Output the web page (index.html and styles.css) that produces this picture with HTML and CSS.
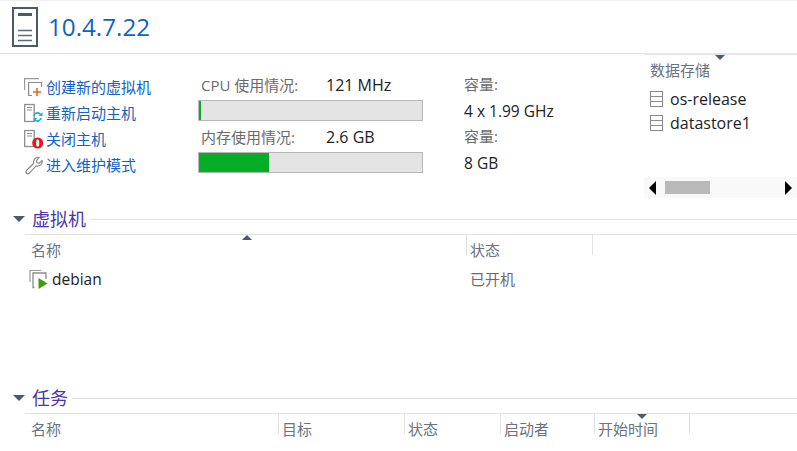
FILE: index.html
```html
<!DOCTYPE html>
<html lang="zh">
<head>
<meta charset="utf-8">
<title>10.4.7.22</title>
<link rel="stylesheet" href="styles.css">
</head>
<body>
<header class="page-head">
  <svg class="host-icon" width="26" height="40" viewBox="0 0 26 40"><rect x="1" y="1" width="24" height="38" fill="#fff" stroke="#4a5a68" stroke-width="2"/><rect x="6" y="6" width="14" height="3" fill="#4a5a68"/><path d="M6 23.5h14M6 28.5h14M6 33.5h14" stroke="#5f6c78" stroke-width="1.4"/></svg>
  <h1 class="host-name">10.4.7.22</h1>
</header>
<div class="summary">
  <ul class="actions">
    <li class="action">
      <svg width="20" height="20" viewBox="0 0 20 20"><path d="M.6 13V1.600H15" fill="none" stroke="#9a9a9a" stroke-width="1.2"/><path d="M8 18.500H4.600V5.500H17.500V10" fill="none" stroke="#8c8c8c" stroke-width="1.2"/><path d="M13 11v8M9 15h8" stroke="#f0631e" stroke-width="1.6"/></svg>
      <a href="#">创建新的虚拟机</a>
    </li>
    <li class="action">
      <svg width="20" height="20" viewBox="0 0 20 20"><rect x=".7" y="1.500" width="9.500" height="17" fill="#fff" stroke="#8e8e8e" stroke-width="1.3"/><path d="M3 4.500h5M3 7h5" stroke="#8e8e8e"/><path d="M10 13a3.500 3.500 0 0 1 6-2l1 1M17 15a3.500 3.500 0 0 1-6 2" fill="none" stroke="#22b0d4" stroke-width="1.800"/><path d="M18.500 9v4h-4zM9.500 19v-4h4z" fill="#22b0d4"/></svg>
      <a href="#">重新启动主机</a>
    </li>
    <li class="action">
      <svg width="20" height="20" viewBox="0 0 20 20"><rect x=".7" y="1.500" width="9.500" height="16" fill="#fff" stroke="#8e8e8e" stroke-width="1.3"/><path d="M3 4.500h5M3 7h5" stroke="#8e8e8e"/><circle cx="13.700" cy="14" r="5.500" fill="#e8141c"/><rect x="12.200" y="10.500" width="3" height="7" rx="1.500" fill="#fff"/></svg>
      <a href="#">关闭主机</a>
    </li>
    <li class="action">
      <svg width="20" height="20" viewBox="0 0 20 20"><path d="M2.500 15.500 9.800 8.300a4.500 4.500 0 0 1 5.400-5.700l-2.700 2.800.5 2.300 2.300.5 2.700-2.700a4.500 4.500 0 0 1-5.800 5.400l-6.900 7.300a1.800 1.800 0 0 1-2.800-2.700z" fill="#fff" stroke="#8a8a8a" stroke-width="1.2" stroke-linejoin="round"/></svg>
      <a href="#">进入维护模式</a>
    </li>
  </ul>
  <div class="usage">
    <div class="usage-row"><span class="usage-label">CPU 使用情况:</span><span class="usage-value">121 MHz</span></div>
    <div class="meter"><div class="meter-fill" style="width:1%"></div></div>
    <div class="usage-row"><span class="usage-label">内存使用情况:</span><span class="usage-value">2.6 GB</span></div>
    <div class="meter"><div class="meter-fill" style="width:31.500%"></div></div>
  </div>
  <dl class="capacity">
    <dt>容量:</dt>
    <dd>4 x 1.99 GHz</dd>
    <dt>容量:</dt>
    <dd>8 GB</dd>
  </dl>
  <section class="stores">
    <span class="arrow arrow-down stores-arrow"></span>
    <h2 class="stores-title">数据存储</h2>
    <ul class="store-list">
      <li class="store"><svg width="13" height="16" viewBox="0 0 13 16"><rect x=".5" y=".5" width="12" height="15" fill="none" stroke="#8a8a8a"/><path d="M1 5.500h11M1 10.500h11" stroke="#8a8a8a"/></svg>os-release</li>
      <li class="store"><svg width="13" height="16" viewBox="0 0 13 16"><rect x=".5" y=".5" width="12" height="15" fill="none" stroke="#8a8a8a"/><path d="M1 5.500h11M1 10.500h11" stroke="#8a8a8a"/></svg>datastore1</li>
    </ul>
    <div class="scrollbar">
      <span class="scroll-left"></span>
      <span class="scroll-thumb"></span>
      <span class="scroll-right"></span>
    </div>
  </section>
</div>
<section class="panel panel-vm">
  <div class="panel-head"><span class="arrow arrow-down panel-toggle"></span><h2 class="panel-title">虚拟机</h2><span class="panel-rule"></span></div>
  <div class="table-head vm-cols">
    <span class="arrow arrow-up sort-vm"></span>
    <div class="col">名称</div>
    <div class="col">状态</div>
    <div class="col"></div>
  </div>
  <div class="vm-row vm-cols">
    <div class="vm-name">
      <svg width="20" height="20" viewBox="0 0 20 20"><path d="M1 13V1.500h11" fill="none" stroke="#9a9a9a" stroke-width="1.2"/><path d="M5.500 18.500H4V4h13v6" fill="none" stroke="#8c8c8c" stroke-width="1.300"/><path d="M9.500 9l9 5.500-9 5.500z" fill="#3f9a10"/></svg>
      debian
    </div>
    <div class="vm-state">已开机</div>
  </div>
</section>
<section class="panel panel-task">
  <div class="panel-head"><span class="arrow arrow-down panel-toggle"></span><h2 class="panel-title">任务</h2><span class="panel-rule"></span></div>
  <div class="table-head task-cols">
    <span class="arrow arrow-down sort-task"></span>
    <div class="col">名称</div>
    <div class="col">目标</div>
    <div class="col">状态</div>
    <div class="col">启动者</div>
    <div class="col">开始时间</div>
    <div class="col"></div>
  </div>
</section>
</body>
</html>
```
FILE: styles.css
```css
* { box-sizing: border-box; }
html, body { margin: 0; height: 451px; overflow: hidden; background: #fff; }
body {
  font-family: "Open Sans", "Noto Sans CJK SC", sans-serif;
  font-size: 15px;
  color: #222;
  border-top: 1px solid #f0f0f0;
}
ul, dl, dd, h1, h2 { margin: 0; padding: 0; font-weight: 400; }
ul { list-style: none; }

.page-head {
  display: flex;
  align-items: center;
  gap: 10px;
  height: 53px;
  padding: 0 0 1px 12px;
  border-bottom: 1px solid #e2e2e2;
}
.host-icon { flex: none; }
.host-name { font-size: 24.200px; line-height: 1; color: #0f63c4; margin-top: 1px; }

.summary { display: flex; height: 145px; }
.actions { width: 198px; padding: 20px 0 0 24px; }
.action { display: flex; align-items: center; gap: 2px; height: 26px; }
.action svg { flex: none; }
.action a { color: #0f63c4; text-decoration: none; line-height: 20px; }

.usage { width: 225px; padding-top: 21px; }
.usage-row { display: flex; height: 25px; align-items: center; padding: 0 0 6px 3px; }
.usage-row + .meter + .usage-row { margin-top: 6px; }
.usage-label { width: 125px; color: #6b6b6b; }
.usage-value { color: #222; font-size: 16px; }
.meter { height: 21px; background: #e4e4e4; border: 1px solid #b8b8b8; }
.meter-fill { height: 100%; background: #06ad27; }

.capacity { width: 223px; padding: 17px 0 0 41px; }
.capacity dt, .capacity dd { height: 26px; line-height: 26px; }
.capacity dt { color: #6b6b6b; }
.capacity dd { color: #222; font-size: 15.500px; line-height: 28px; }

.stores {
  position: relative;
  flex: 1;
  margin-left: -2px;
  min-width: 0;
  border-top: 2px solid #e6e6e6;
  margin-top: -1px;
}
.stores-arrow { position: absolute; left: 71px; top: 0; }
.stores-title { font-size: 15px; line-height: 20px; margin: 5px 0 0 6px; color: #6b7280; }
.store-list { margin: 7px 0 0 6px; }
.store { display: flex; align-items: center; gap: 7px; height: 24px; font-size: 16px; color: #222; }
.scrollbar {
  display: flex;
  align-items: center;
  height: 21px;
  margin-top: 42px;
  padding: 0 5px;
  background: #f9f9f9;
}
.scroll-left, .scroll-right { width: 0; height: 0; border-top: 7px solid transparent; border-bottom: 7px solid transparent; }
.scroll-left { border-right: 7px solid #000; }
.scroll-right { border-left: 7px solid #000; margin-left: auto; }
.scroll-thumb { width: 45px; height: 13px; margin-left: 9px; background: #b9b9b9; }

.arrow { display: block; width: 0; height: 0; border-left: 5px solid transparent; border-right: 5px solid transparent; }
.arrow-down { border-top: 5px solid #4a5a68; }
.arrow-up { border-bottom: 5px solid #4a5a68; }

.panel-vm { height: 187px; padding-top: 8px; }
.panel-head { display: flex; align-items: center; height: 24px; padding-left: 13px; }
.panel-toggle { border-left-width: 6px; border-right-width: 6px; border-top-width: 6px; }
.panel-title { font-size: 18px; line-height: 24px; color: #4a35ae; margin-left: 7px; }
.panel-rule { flex: 1; height: 1px; margin-left: 4px; background: #e2e2e2; }

.table-head {
  position: relative;
  display: grid;
  height: 21px;
  margin: 3px 0 0 25px;
  border-top: 1px solid #e2e2e2;
  color: #6b7280;
}
.vm-cols { grid-template-columns: 441px 126px 1fr; }
.task-cols { grid-template-columns: 253px 126px 96px 94px 95px 1fr; }
.col { padding: 5px 0 0 6px; line-height: 20px; height: 20px; overflow: visible; white-space: nowrap; }
.col + .col { border-left: 1px solid #e2e2e2; padding-left: 3px; }
.sort-vm { position: absolute; left: 217px; top: 0; }
.sort-task { position: absolute; left: 612px; top: 0; }

.vm-row { display: grid; margin: 12px 0 0 25px; height: 24px; align-items: center; }
.vm-name { display: flex; align-items: center; gap: 3px; padding-left: 4px; font-size: 15.500px; color: #222; }
.vm-state { padding: 0 0 2px 4px; color: #6b6b6b; }
```
